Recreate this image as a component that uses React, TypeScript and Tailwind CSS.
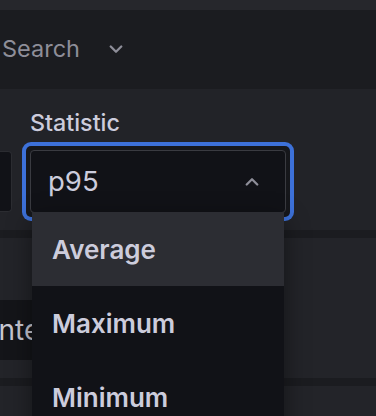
import * as React from 'react';

function Chevron({ up, className }: { up?: boolean; className?: string }) {
  return (
    <svg className={className} viewBox="0 0 16 10" fill="none" stroke="currentColor" strokeWidth="2.6" strokeLinecap="round" strokeLinejoin="round">
      {up ? <path d="M2 8.5L8 2.5L14 8.5" /> : <path d="M2 1.5L8 7.5L14 1.5" />}
    </svg>
  );
}

const options = ['Average', 'Maximum', 'Minimum'];

export default function App() {
  return (
    <div className="relative w-[376px] h-[416px] overflow-hidden bg-[#222328] font-['Inter',sans-serif] text-[#ccccdc]">
      <div className="h-[10px] bg-[#26272c]" />

      <div className="h-[79px] bg-[#1b1c20] flex items-center">
        <span className="pl-[2px] text-[23.5px] leading-none text-[#8e8e99] -mt-[1px]">Search</span>
        <Chevron className="ml-[29px] w-[14px] h-[9px] text-[#8e8e99]" />
      </div>

      <div className="h-[141px] bg-[#222328] pt-[19px]">
        <div className="pl-[30px] text-[23.3px] leading-[30px] font-medium">Statistic</div>
        <div className="mt-[4px] flex items-start">
          <div className="w-[12px] h-[61px] mt-[9px] bg-[#111217] border border-[#2b2c31] border-l-0 rounded-r-[4px]" />
          <div className="ml-[10px] p-[4px] rounded-[9px] bg-[#3d71d9]">
            <div className="p-[4px] rounded-[5px] bg-[#16171b]">
              <div className="relative w-[256px] h-[63px] bg-[#111217] border border-[#3a3b41] rounded-[4px] flex items-center pl-[17px] pr-[26px]">
                <span className="flex-1 text-[27.5px] leading-none">p95</span>
                <Chevron up className="w-[14px] h-[9px] text-[#8e8e99]" />
                <div className="absolute left-[1px] right-[1px] top-[61px] z-10 bg-[#111217] shadow-[0_8px_24px_rgba(0,0,0,0.45)]">
                  {options.map((o, i) => (
                    <div
                      key={o}
                      className={`h-[74px] flex items-center pl-[20px] text-[26px] font-semibold ${i === 0 ? 'bg-[#2c2d33]' : ''}`}
                    >
                      {o}
                    </div>
                  ))}
                </div>
              </div>
            </div>
          </div>
        </div>
      </div>

      <div className="h-[8px] bg-[#1b1c20]" />

      <div className="h-[140px] bg-[#232429] pt-[62px]">
        <div className="w-[32px] h-[60px] bg-[#141519] flex items-center overflow-hidden">
          <span className="text-[28px] leading-none text-[#c8c8d2] -ml-[9px] whitespace-nowrap">Inte</span>
        </div>
      </div>

      <div className="h-[8px] bg-[#1b1c20]" />

      <div className="h-[30px] bg-[#232429]" />
    </div>
  );
}
